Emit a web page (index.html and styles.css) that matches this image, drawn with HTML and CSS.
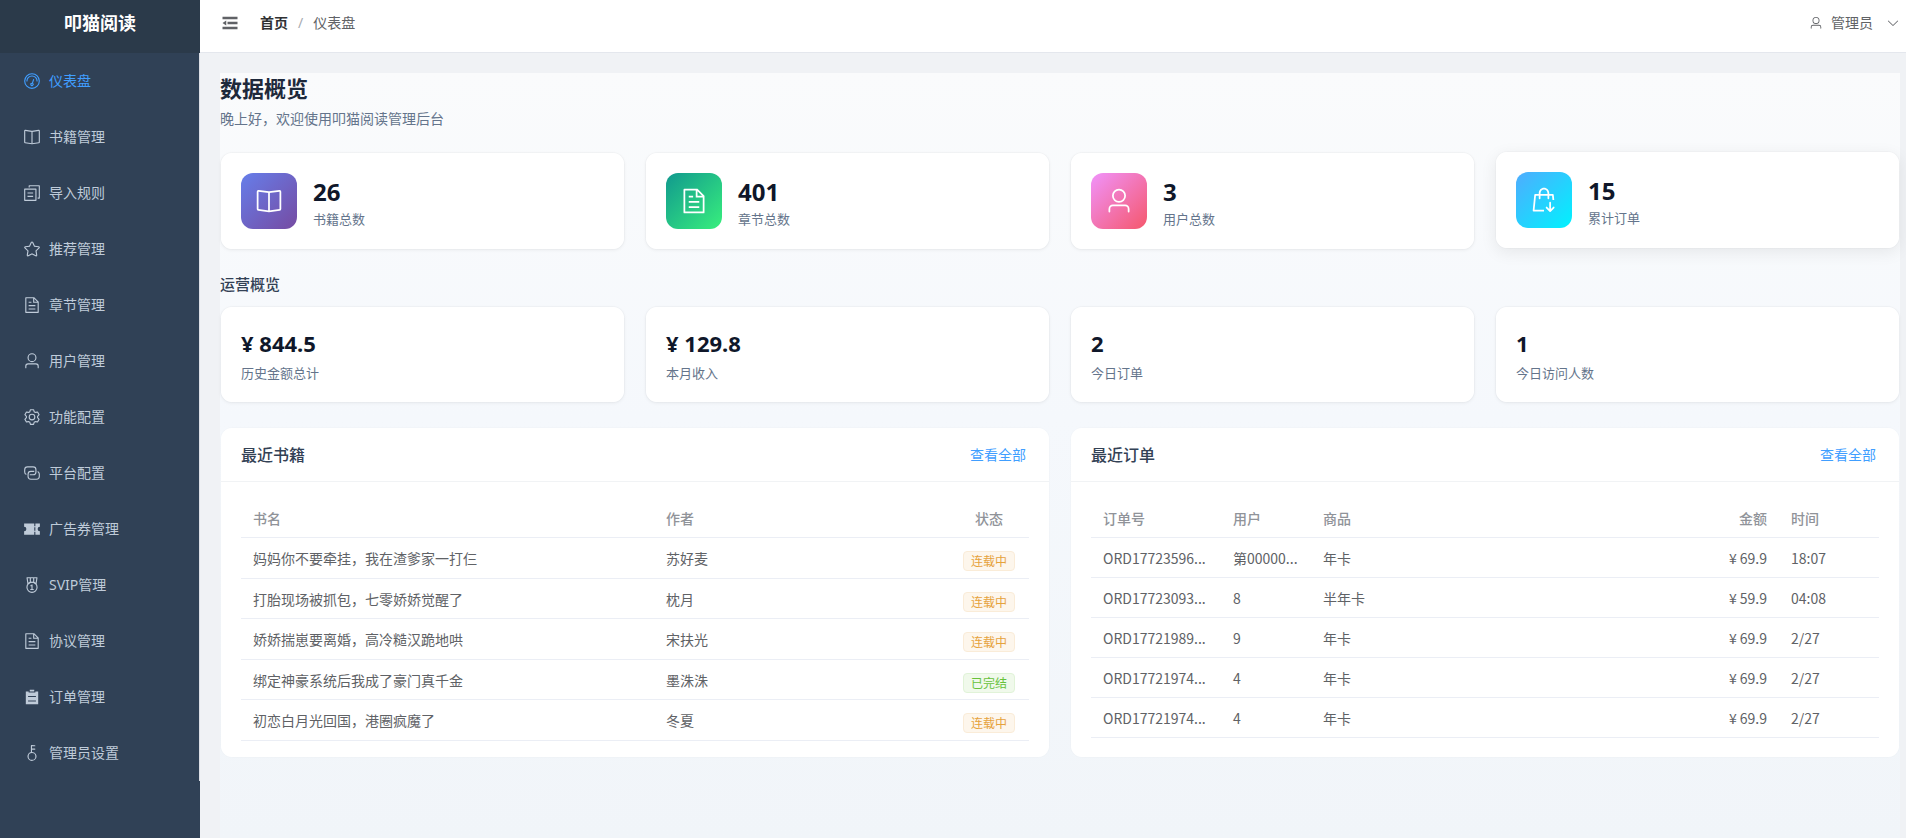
FILE: index.html
```html
<!DOCTYPE html>
<html lang="zh-CN">
<head>
<meta charset="utf-8">
<title>叩猫阅读</title>
<link rel="stylesheet" href="styles.css">
</head>
<body>
<svg class="sprite" aria-hidden="true">
  <symbol id="i-odometer" viewBox="0 0 1024 1024"><path d="M512 896a384 384 0 1 0 0-768 384 384 0 0 0 0 768m0 64a448 448 0 1 1 0-896 448 448 0 0 1 0 896"/><path d="M192 512a320 320 0 1 1 640 0 32 32 0 1 1-64 0 256 256 0 1 0-512 0 32 32 0 0 1-64 0"/><path d="M570.432 627.84A96 96 0 1 1 509.568 608l60.992-187.776A32 32 0 1 1 631.424 440l-60.992 187.776zM502.08 734.464a32 32 0 1 0 19.84-60.928 32 32 0 0 0-19.84 60.928"/></symbol>
  <symbol id="i-reading" viewBox="0 0 1024 1024"><path d="m512 863.36 384-54.848v-638.72L525.568 222.72a96 96 0 0 1-27.136 0L128 169.792v638.72zM137.024 106.432l370.432 52.928a32 32 0 0 0 9.088 0l370.432-52.928A64 64 0 0 1 960 169.792v638.72a64 64 0 0 1-54.976 63.36l-388.48 55.488a32 32 0 0 1-9.088 0l-388.48-55.488A64 64 0 0 1 64 808.512v-638.72a64 64 0 0 1 73.024-63.36z"/><path d="M480 192h64v704h-64z"/></symbol>
  <symbol id="i-copy" viewBox="0 0 1024 1024"><path d="M128 320v576h576V320zm-32-64h640a32 32 0 0 1 32 32v640a32 32 0 0 1-32 32H96a32 32 0 0 1-32-32V288a32 32 0 0 1 32-32M960 96v704a32 32 0 0 1-32 32h-96v-64h64V128H384v64h-64V96a32 32 0 0 1 32-32h576a32 32 0 0 1 32 32M256 672h320v64H256zm0-192h320v64H256z"/></symbol>
  <symbol id="i-star" viewBox="0 0 1024 1024"><path d="m512 747.84 228.16 119.936a6.4 6.4 0 0 0 9.28-6.72l-43.52-254.08 184.512-179.904a6.4 6.4 0 0 0-3.52-10.88l-255.104-37.12L517.76 147.904a6.4 6.4 0 0 0-11.52 0L392.192 379.072l-255.104 37.12a6.4 6.4 0 0 0-3.52 10.88L318.08 606.976l-43.584 254.08a6.4 6.4 0 0 0 9.28 6.72zM313.6 924.48a70.4 70.4 0 0 1-102.144-74.24l37.888-220.928L88.96 472.96A70.4 70.4 0 0 1 128 352.896l221.76-32.256 99.2-200.96a70.4 70.4 0 0 1 126.208 0l99.2 200.96 221.824 32.256a70.4 70.4 0 0 1 39.04 120.064L774.72 629.376l37.888 220.928a70.4 70.4 0 0 1-102.144 74.24L512 820.096l-198.4 104.32z"/></symbol>
  <symbol id="i-document" viewBox="0 0 1024 1024"><path d="M832 384H576V128H192v768h640zm-26.496-64L640 154.496V320zM160 64h480l256 256v608a32 32 0 0 1-32 32H160a32 32 0 0 1-32-32V96a32 32 0 0 1 32-32m160 448h384v64H320zm0-192h160v64H320zm0 384h384v64H320z"/></symbol>
  <symbol id="i-user" viewBox="0 0 1024 1024"><path d="M512 512a192 192 0 1 0 0-384 192 192 0 0 0 0 384m0 64a256 256 0 1 1 0-512 256 256 0 0 1 0 512m320 320v-96a96 96 0 0 0-96-96H288a96 96 0 0 0-96 96v96a32 32 0 1 1-64 0v-96a160 160 0 0 1 160-160h448a160 160 0 0 1 160 160v96a32 32 0 1 1-64 0"/></symbol>
  <symbol id="i-setting" viewBox="0 0 1024 1024"><path d="M600.704 64a32 32 0 0 1 30.464 22.208l35.2 109.376c14.784 7.232 28.928 15.36 42.432 24.512l112.384-24.192a32 32 0 0 1 34.432 15.36L944.32 364.8a32 32 0 0 1-4.032 37.504l-77.12 85.12a357.12 357.12 0 0 1 0 49.024l77.12 85.248a32 32 0 0 1 4.032 37.504l-88.704 153.6a32 32 0 0 1-34.432 15.296L708.8 803.904c-13.44 9.088-27.648 17.28-42.368 24.512l-35.264 109.376A32 32 0 0 1 600.704 960H423.296a32 32 0 0 1-30.464-22.208L357.696 828.48a351.616 351.616 0 0 1-42.56-24.64l-112.32 24.256a32 32 0 0 1-34.432-15.36L79.68 659.2a32 32 0 0 1 4.032-37.504l77.12-85.248a357.12 357.12 0 0 1 0-48.896l-77.12-85.248A32 32 0 0 1 79.68 364.8l88.704-153.6a32 32 0 0 1 34.432-15.296l112.32 24.256c13.568-9.152 27.776-17.408 42.56-24.64l35.2-109.312A32 32 0 0 1 423.232 64H600.64zm-23.424 64H446.72l-36.352 113.088-24.512 11.968a294.113 294.113 0 0 0-34.816 20.096l-22.656 15.36-116.224-25.088-65.28 113.152 79.68 88.192-1.92 27.136a293.12 293.12 0 0 0 0 40.192l1.92 27.136-79.808 88.192 65.344 113.152 116.224-25.024 22.656 15.296a294.113 294.113 0 0 0 34.816 20.096l24.512 11.968L446.72 896h130.688l36.48-113.152 24.448-11.904a288.282 288.282 0 0 0 34.752-20.096l22.592-15.296 116.288 25.024 65.28-113.152-79.744-88.192 1.92-27.136a293.12 293.12 0 0 0 0-40.256l-1.92-27.136 79.808-88.128-65.344-113.152-116.288 24.96-22.592-15.232a287.616 287.616 0 0 0-34.752-20.096l-24.448-11.904L577.344 128zM512 320a192 192 0 1 1 0 384 192 192 0 0 1 0-384m0 64a128 128 0 1 0 0 256 128 128 0 0 0 0-256"/></symbol>
  <symbol id="i-connection" viewBox="0 0 1024 1024"><path d="M640 384v64H448a128 128 0 0 0-128 128v128a128 128 0 0 0 128 128h320a128 128 0 0 0 128-128V576a128 128 0 0 0-64-110.848V394.88c74.56 26.368 128 97.472 128 181.056v128a192 192 0 0 1-192 192H448a192 192 0 0 1-192-192V576a192 192 0 0 1 192-192z"/><path d="M384 640v-64h192a128 128 0 0 0 128-128V320a128 128 0 0 0-128-128H256a128 128 0 0 0-128 128v128a128 128 0 0 0 64 110.848v70.272A192.064 192.064 0 0 1 64 448V320a192 192 0 0 1 192-192h320a192 192 0 0 1 192 192v128a192 192 0 0 1-192 192z"/></symbol>
  <symbol id="i-ticket" viewBox="0 0 1024 1024"><path d="M640 832H64V640a128 128 0 1 0 0-256V192h576v160h64V192h256v192a128 128 0 1 0 0 256v192H704V672h-64zm0-416v192h64V416z"/></symbol>
  <symbol id="i-medal" viewBox="0 0 1024 1024"><path d="M512 896a256 256 0 1 0 0-512 256 256 0 0 0 0 512m0 64a320 320 0 1 1 0-640 320 320 0 0 1 0 640"/><path d="M576 128H448v200a286.72 286.72 0 0 1 64-8c19.52 0 40.832 2.688 64 8zm64 0v219.648c24.448 9.088 50.56 20.416 78.4 33.92L757.44 128zm-256 0H266.624l39.04 253.568c27.84-13.504 53.888-24.832 78.336-33.92zM229.312 64h565.376a32 32 0 0 1 31.616 36.864L768 480c-113.792-64-199.104-96-256-96s-142.208 32-256 96l-58.304-379.136A32 32 0 0 1 229.312 64"/><path d="M544 480v256h64v64H416v-64h64V576h-64v-48c38 0 64-16 70-48z"/></symbol>
  <symbol id="i-list" viewBox="0 0 1024 1024"><path d="M704 192h160v736H160V192h160v64h384zM288 512h448v-64H288zm0 256h448v-64H288zm96-576V96h256v96z"/></symbol>
  <symbol id="i-key" viewBox="0 0 1024 1024"><path d="M448 456.064V96a32 32 0 0 1 32-32.064L672 64a32 32 0 0 1 0 64H512v128h160a32 32 0 0 1 0 64H512v128a256 256 0 1 1-64 8.064M512 896a192 192 0 1 0 0-384 192 192 0 0 0 0 384"/></symbol>
  <symbol id="i-soldout" viewBox="0 0 1024 1024"><path d="M704 288h131.072a32 32 0 0 1 31.808 28.8L886.4 512h-64.384l-16-160H704v96a32 32 0 1 1-64 0v-96H384v96a32 32 0 0 1-64 0v-96H217.92l-51.2 512H512v64H131.328a32 32 0 0 1-31.808-35.2l57.6-576a32 32 0 0 1 31.808-28.8H320v-22.336C320 154.688 405.504 64 512 64s192 90.688 192 201.664v22.4zm-64 0v-22.336C640 189.248 582.272 128 512 128s-128 61.248-128 137.664v22.4h256zm201.408 476.16a32 32 0 1 1 45.248 45.184l-128 128a32 32 0 0 1-45.248 0l-128-128a32 32 0 1 1 45.248-45.248L704 837.504V608a32 32 0 1 1 64 0v229.504l73.408-73.408z"/></symbol>
  <symbol id="i-fold" viewBox="0 0 1024 1024"><path d="M896 192H128v128h768zm0 256H384v128h512zm0 256H128v128h768zM320 384 128 512l192 128z"/></symbol>
  <symbol id="i-down" viewBox="0 0 1024 1024"><path d="M831.872 340.864 512 652.672 192.128 340.864a30.592 30.592 0 0 0-42.752 0 29.12 29.12 0 0 0 0 41.6L489.664 714.24a32 32 0 0 0 44.672 0l340.288-331.712a29.12 29.12 0 0 0 0-41.728 30.592 30.592 0 0 0-42.752 0z"/></symbol>
</svg>

<div class="layout">
  <aside class="sidebar">
    <div class="brand">叩猫阅读</div>
    <nav class="menu">
      <a class="menu-item menu-item--active" href="#"><svg class="icon"><use href="#i-odometer"/></svg>仪表盘</a>
      <a class="menu-item" href="#"><svg class="icon"><use href="#i-reading"/></svg>书籍管理</a>
      <a class="menu-item" href="#"><svg class="icon"><use href="#i-copy"/></svg>导入规则</a>
      <a class="menu-item" href="#"><svg class="icon"><use href="#i-star"/></svg>推荐管理</a>
      <a class="menu-item" href="#"><svg class="icon"><use href="#i-document"/></svg>章节管理</a>
      <a class="menu-item" href="#"><svg class="icon"><use href="#i-user"/></svg>用户管理</a>
      <a class="menu-item" href="#"><svg class="icon"><use href="#i-setting"/></svg>功能配置</a>
      <a class="menu-item" href="#"><svg class="icon"><use href="#i-connection"/></svg>平台配置</a>
      <a class="menu-item" href="#"><svg class="icon"><use href="#i-ticket"/></svg>广告券管理</a>
      <a class="menu-item" href="#"><svg class="icon"><use href="#i-medal"/></svg>SVIP管理</a>
      <a class="menu-item" href="#"><svg class="icon"><use href="#i-document"/></svg>协议管理</a>
      <a class="menu-item" href="#"><svg class="icon"><use href="#i-list"/></svg>订单管理</a>
      <a class="menu-item" href="#"><svg class="icon"><use href="#i-key"/></svg>管理员设置</a>
    </nav>
  </aside>

  <div class="content">
    <header class="topbar">
      <div class="topbar-left">
        <button class="fold-btn" type="button" aria-label="折叠菜单"><svg class="icon icon--fold"><use href="#i-fold"/></svg></button>
        <nav class="breadcrumb">
          <a class="crumb-home" href="#">首页</a>
          <span class="crumb-sep">/</span>
          <span>仪表盘</span>
        </nav>
      </div>
      <button class="user-btn" type="button">
        <svg class="icon icon--small"><use href="#i-user"/></svg>
        <span>管理员</span>
        <svg class="icon icon--small icon--arrow"><use href="#i-down"/></svg>
      </button>
    </header>

    <main class="main">
      <div class="dashboard">
        <div class="page-head">
          <h1 class="page-title">数据概览</h1>
          <p class="page-sub">晚上好，欢迎使用叩猫阅读管理后台</p>
        </div>

        <section class="stats">
          <div class="card stat">
            <div class="stat-icon stat-icon--book"><svg class="icon icon--large"><use href="#i-reading"/></svg></div>
            <div><div class="stat-value">26</div><div class="stat-label">书籍总数</div></div>
          </div>
          <div class="card stat">
            <div class="stat-icon stat-icon--chapter"><svg class="icon icon--large"><use href="#i-document"/></svg></div>
            <div><div class="stat-value">401</div><div class="stat-label">章节总数</div></div>
          </div>
          <div class="card stat">
            <div class="stat-icon stat-icon--user"><svg class="icon icon--large"><use href="#i-user"/></svg></div>
            <div><div class="stat-value">3</div><div class="stat-label">用户总数</div></div>
          </div>
          <div class="card stat card--raised">
            <div class="stat-icon stat-icon--order"><svg class="icon icon--large"><use href="#i-soldout"/></svg></div>
            <div><div class="stat-value">15</div><div class="stat-label">累计订单</div></div>
          </div>
        </section>

        <h2 class="section-title">运营概览</h2>
        <section class="stats">
          <div class="card metric"><div class="metric-value">¥ 844.5</div><div class="stat-label">历史金额总计</div></div>
          <div class="card metric"><div class="metric-value">¥ 129.8</div><div class="stat-label">本月收入</div></div>
          <div class="card metric"><div class="metric-value">2</div><div class="stat-label">今日订单</div></div>
          <div class="card metric"><div class="metric-value">1</div><div class="stat-label">今日访问人数</div></div>
        </section>

        <div class="panels">
          <section class="panel">
            <div class="panel-head"><h3 class="panel-title">最近书籍</h3><a class="panel-link" href="#">查看全部</a></div>
            <div class="panel-body">
              <table class="table table--books">
                <colgroup><col class="col-title"><col><col class="col-status"></colgroup>
                <thead><tr><th>书名</th><th>作者</th><th class="center">状态</th></tr></thead>
                <tbody>
                  <tr><td>妈妈你不要牵挂，我在渣爹家一打仨</td><td>苏好麦</td><td class="status"><span class="tag tag--warning">连载中</span></td></tr>
                  <tr><td>打胎现场被抓包，七零娇娇觉醒了</td><td>枕月</td><td class="status"><span class="tag tag--warning">连载中</span></td></tr>
                  <tr><td>娇娇揣崽要离婚，高冷糙汉跪地哄</td><td>宋扶光</td><td class="status"><span class="tag tag--warning">连载中</span></td></tr>
                  <tr><td>绑定神豪系统后我成了豪门真千金</td><td>墨洙洙</td><td class="status"><span class="tag tag--success">已完结</span></td></tr>
                  <tr><td>初恋白月光回国，港圈疯魔了</td><td>冬夏</td><td class="status"><span class="tag tag--warning">连载中</span></td></tr>
                </tbody>
              </table>
            </div>
          </section>

          <section class="panel">
            <div class="panel-head"><h3 class="panel-title">最近订单</h3><a class="panel-link" href="#">查看全部</a></div>
            <div class="panel-body">
              <table class="table">
                <colgroup><col class="col-order"><col class="col-user"><col><col class="col-amount"><col class="col-time"></colgroup>
                <thead><tr><th>订单号</th><th>用户</th><th>商品</th><th class="right">金额</th><th>时间</th></tr></thead>
                <tbody>
                  <tr><td>ORD17723596...</td><td>第00000...</td><td>年卡</td><td class="right">¥ 69.9</td><td>18:07</td></tr>
                  <tr><td>ORD17723093...</td><td>8</td><td>半年卡</td><td class="right">¥ 59.9</td><td>04:08</td></tr>
                  <tr><td>ORD17721989...</td><td>9</td><td>年卡</td><td class="right">¥ 69.9</td><td>2/27</td></tr>
                  <tr><td>ORD17721974...</td><td>4</td><td>年卡</td><td class="right">¥ 69.9</td><td>2/27</td></tr>
                  <tr><td>ORD17721974...</td><td>4</td><td>年卡</td><td class="right">¥ 69.9</td><td>2/27</td></tr>
                </tbody>
              </table>
            </div>
          </section>
        </div>
      </div>
    </main>
  </div>
</div>
</body>
</html>
```
FILE: styles.css
```css
* { box-sizing: border-box; }

body {
  margin: 0;
  font-family: "Noto Sans", "Noto Sans CJK SC", sans-serif;
  font-size: 14px;
  line-height: 20px;
  color: #606266;
  background: #f0f2f5;
}

h1, h2, h3, p { margin: 0; }
a { color: inherit; text-decoration: none; }

button {
  padding: 0;
  border: 0;
  background: none;
  font: inherit;
  color: inherit;
  cursor: pointer;
}

.sprite { position: absolute; width: 0; height: 0; }

.icon { width: 18px; height: 18px; fill: currentColor; flex: none; display: block; }
.icon--small { width: 14px; height: 14px; }
.icon--fold { width: 20px; height: 20px; }
.icon--large { width: 28px; height: 28px; }

.layout { display: flex; min-height: 100vh; }

/* Sidebar */
.sidebar { flex: none; width: 200px; background: #304156; }

.brand {
  height: 53px;
  padding-top: 10px;
  background: #2b3a4a;
  color: #fff;
  font-size: 18px;
  font-weight: 700;
  line-height: 27px;
  text-align: center;
}

.menu { border-right: 1px solid #dcdfe6; }

.menu-item {
  display: flex;
  align-items: center;
  gap: 8px;
  height: 56px;
  padding-left: 23px;
  color: #bfcbd9;
}
.menu-item--active { color: #409eff; }

/* Top bar */
.content { flex: 1; min-width: 0; display: flex; flex-direction: column; }

.topbar {
  display: flex;
  justify-content: space-between;
  align-items: center;
  height: 53px;
  padding: 0 6px 6px 20px;
  background: #fff;
  border-bottom: 1px solid #e4e7ed;
}
.topbar-left { display: flex; align-items: center; gap: 20px; }
.breadcrumb { display: flex; gap: 10px; }
.crumb-home { color: #303133; font-weight: 700; }
.crumb-sep { color: #a8abb2; }
.user-btn { display: flex; align-items: center; gap: 8px; }
.icon--arrow { margin-left: 5px; }

/* Dashboard */
.main { flex: 1; display: flex; padding: 20px 6px 0 20px; }

.dashboard {
  flex: 1;
  min-width: 0;
  background: linear-gradient(180deg, #fafbfc 0%, #f5f8fc 45%, #f1f5f9 100%);
}

.page-head { padding-bottom: 23px; }
.page-title { font-size: 22px; line-height: 30px; font-weight: 700; color: #1e293b; }
.page-sub { padding-top: 6px; color: #64748b; }

.stats { display: grid; grid-template-columns: repeat(4, 1fr); gap: 20px; }

.card {
  padding: 20px;
  background: #fff;
  border: 1px solid rgba(0, 0, 0, 0.02);
  border-radius: 12px;
  background-clip: padding-box;
  box-shadow: 0 1px 3px rgba(0, 0, 0, 0.04);
}
.card--raised {
  transform: translateY(-1px);
  box-shadow: 0 4px 16px rgba(0, 0, 0, 0.07);
}

.stat { display: flex; align-items: center; gap: 16px; }

.stat-icon {
  display: flex;
  align-items: center;
  justify-content: center;
  width: 56px;
  height: 56px;
  border-radius: 12px;
  color: #fff;
}
.stat-icon--book { background: linear-gradient(135deg, #667eea, #764ba2); }
.stat-icon--chapter { background: linear-gradient(135deg, #11998e, #38ef7d); }
.stat-icon--user { background: linear-gradient(135deg, #f093fb, #f5576c); }
.stat-icon--order { background: linear-gradient(135deg, #4facfe, #00f2fe); }

.stat-value { font-size: 24px; line-height: 36px; font-weight: 700; color: #0f172a; }
.stat-label { font-size: 13px; line-height: 18px; color: #64748b; }

.section-title {
  padding: 23px 0 11px;
  font-size: 15px;
  line-height: 22px;
  font-weight: 500;
  color: #334155;
}

.metric-value { padding-bottom: 5px; font-size: 22px; line-height: 32px; font-weight: 700; color: #0f172a; }

/* Panels */
.panels { display: grid; grid-template-columns: repeat(2, 1fr); gap: 20px; padding-top: 24px; }

.panel {
  min-width: 0;
  background: #fff;
  background-clip: padding-box;
  border: 1px solid rgba(0, 0, 0, 0.01);
  border-radius: 12px;
}
.panel-head {
  display: flex;
  justify-content: space-between;
  align-items: center;
  height: 54px;
  padding: 0 23px 0 20px;
  border-bottom: 1px solid #f1f3f5;
}
.panel-title { font-size: 16px; font-weight: 500; color: #334155; }
.panel-link { color: #409eff; }
.panel-body { padding: 16px 20px; }

.table {
  width: 100%;
  table-layout: fixed;
  border-collapse: separate;
  border-spacing: 0;
  font-family: "Noto Sans CJK SC", sans-serif;
}
.table th,
.table td {
  height: 40px;
  padding: 0 12px;
  border-bottom: 1px solid #ebeef5;
  text-align: left;
  white-space: nowrap;
}
.table th { color: #909399; font-weight: 500; }
.table--books tbody tr:nth-child(odd) td { height: 41px; }
.table .center { text-align: center; }
.table .right { text-align: right; }
.table .status { padding-top: 4px; text-align: center; }

.col-title { width: 52.4%; }
.col-status { width: 80px; }
.col-order { width: 130px; }
.col-user { width: 90px; }
.col-amount { width: 90px; }
.col-time { width: 100px; }

.tag {
  display: inline-block;
  padding: 0 7px;
  border: 1px solid;
  border-radius: 4px;
  font-size: 12px;
  line-height: 18px;
  vertical-align: middle;
}
.tag--warning { color: #e6a23c; background: #fdf6ec; border-color: #faecd8; }
.tag--success { color: #67c23a; background: #f0f9eb; border-color: #e1f3d8; }
```
